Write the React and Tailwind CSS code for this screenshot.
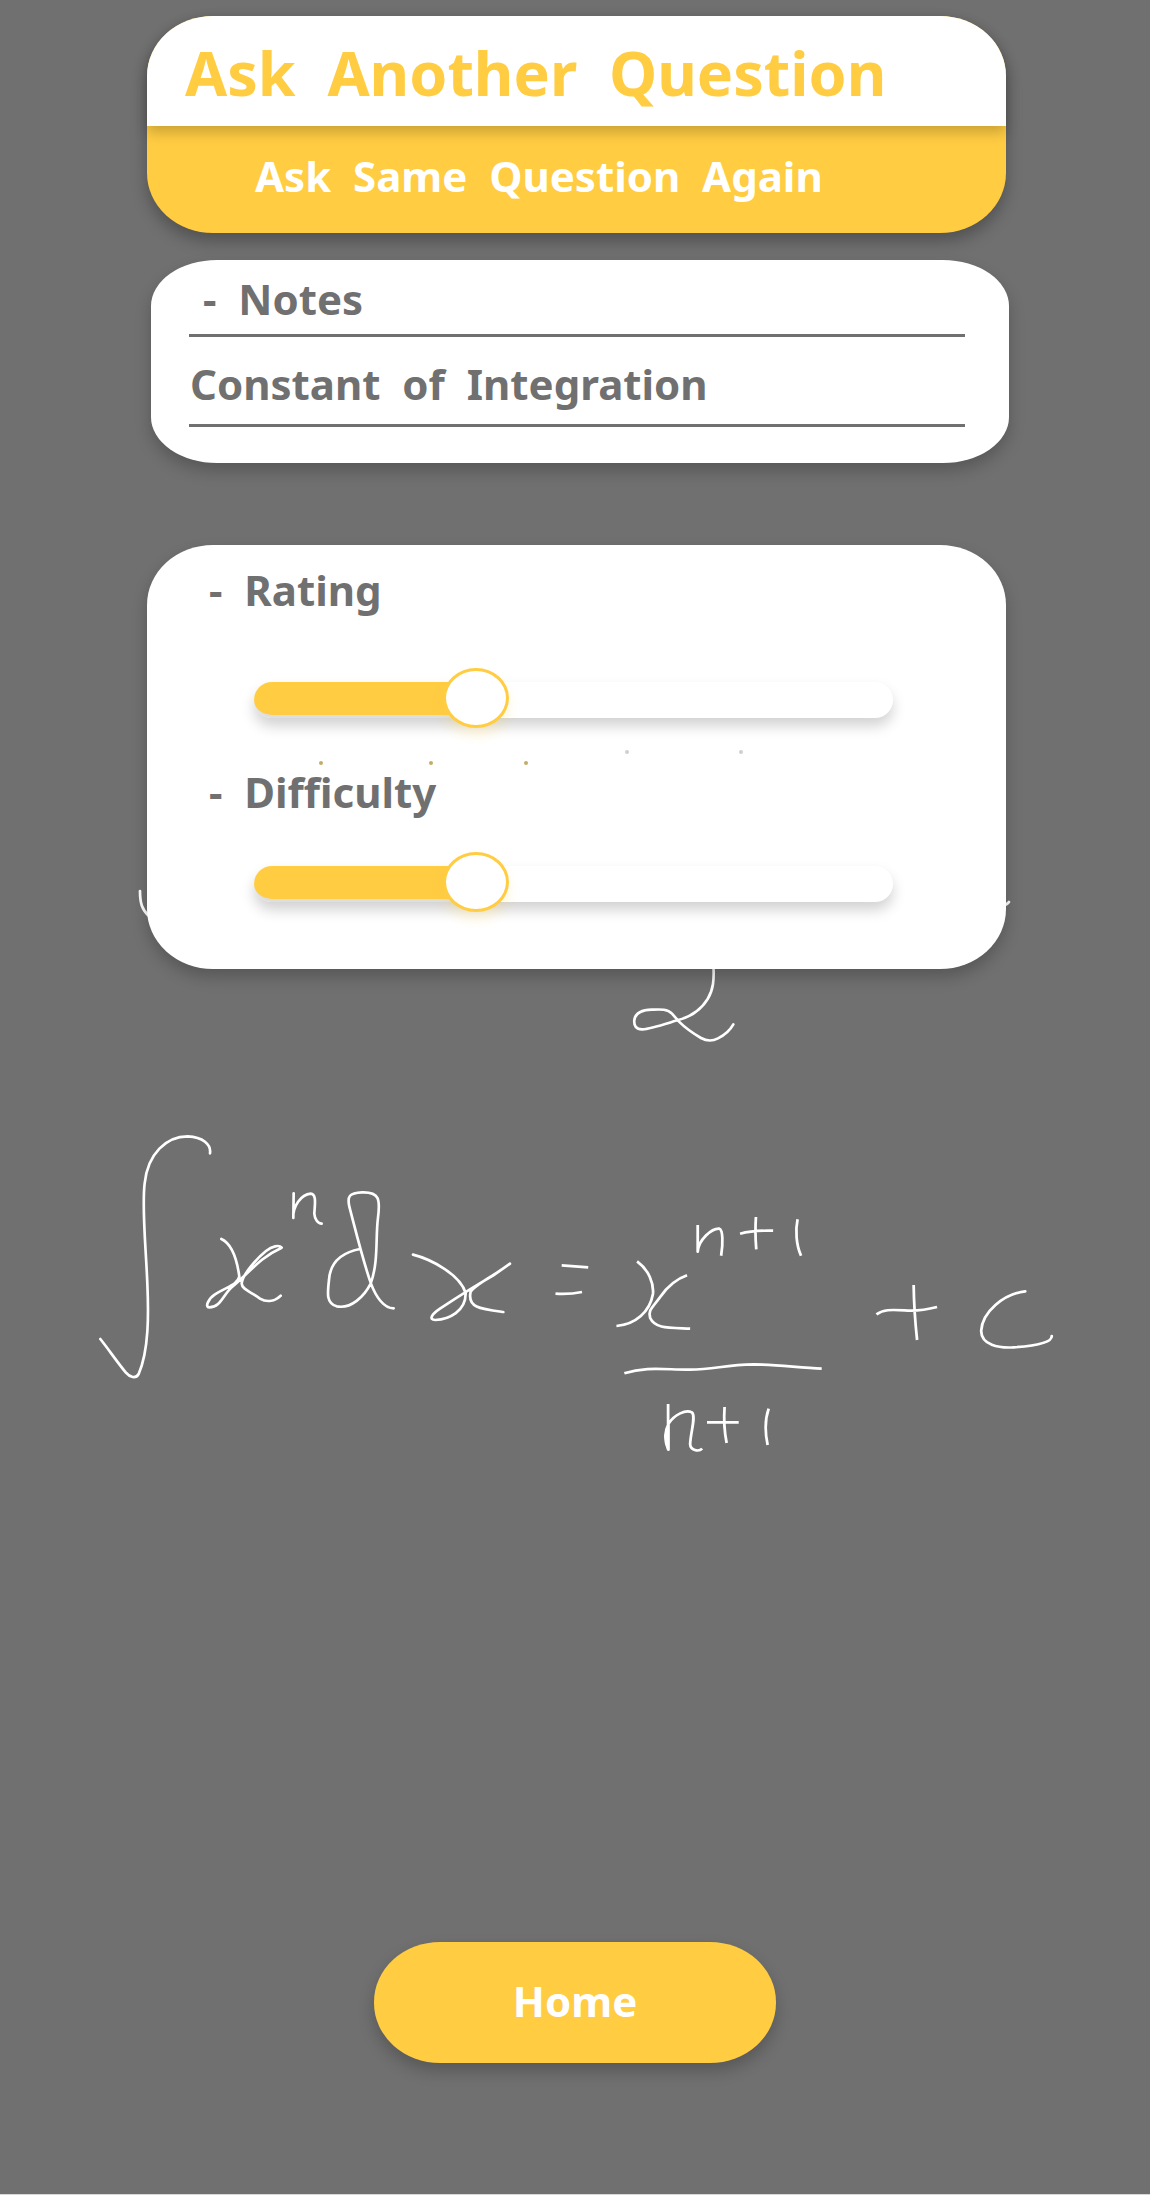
import { useState } from "react";

function Slider({ label, ticks }) {
  const [value, setValue] = useState(33);
  return (
    <div className="relative ml-[107px] mr-[113px] h-9 rounded-[18px] bg-white shadow-[0_8px_14px_rgba(0,0,0,0.18)]">
      <span
        className="absolute left-0 top-0 h-9 rounded-l-[18px] border-b-3 border-[#dedede] bg-[#ffcc42]"
        style={{ width: `calc(33px + (100% - 66px) * ${value / 100})` }}
      />
      <input
        type="range"
        min="0"
        max="100"
        value={value}
        aria-label={label}
        onChange={(e) => setValue(Number(e.target.value))}
        className="absolute inset-x-0 -top-3.5 m-0 h-[60px] w-full cursor-pointer appearance-none bg-transparent outline-none [&::-webkit-slider-thumb]:h-[60px] [&::-webkit-slider-thumb]:w-[66px] [&::-webkit-slider-thumb]:appearance-none [&::-webkit-slider-thumb]:rounded-[50%] [&::-webkit-slider-thumb]:border-[3px] [&::-webkit-slider-thumb]:border-solid [&::-webkit-slider-thumb]:border-[#ffcc42] [&::-webkit-slider-thumb]:bg-white [&::-webkit-slider-thumb]:shadow-[0_8px_12px_rgba(255,204,66,0.18)]"
      />
      {ticks && (
        <svg
          viewBox="0 0 639 20"
          className="pointer-events-none absolute left-0 top-[66px] w-full"
          aria-hidden="true"
        >
          <g fill="#c4ac66">
            <circle cx="67" cy="15" r="2" />
            <circle cx="177" cy="15" r="2" />
            <circle cx="272" cy="15" r="2" />
          </g>
          <g fill="#cfcfcf">
            <circle cx="373" cy="4" r="2" />
            <circle cx="487" cy="4" r="2" />
          </g>
        </svg>
      )}
    </div>
  );
}

function Handwriting() {
  return (
    <svg
      viewBox="0 545 1150 1397"
      className="col-start-1 row-start-1 w-full"
      fill="none"
      stroke="white"
      strokeLinecap="round"
      strokeLinejoin="round"
      role="img"
      aria-label="Handwritten power rule for integration"
    >
      <g strokeWidth="2.7">
        <path d="M140 891C140 903 142 910 149 916" />
        <path d="M1003 905Q1007 905 1009 902" />
      </g>
      <g transform="translate(600 930) scale(.33333)" strokeWidth="8">
        <path d="M340 100C343 150 340 180 323 207C303 240 267 262 232 271C195 282 150 297 128 298C108 299 101 287 103 270C106 247 125 240 155 239C180 238 202 236 216 251L237 275C255 293 279 310 303 324C321 334 337 334 354 325C374 315 390 301 400 283" />
      </g>
      <g transform="translate(80 1110) scale(.33333)" strokeWidth="8">
        <path d="M61 687C85 717 112 757 137 787C150 802 167 808 176 792C207 720 206 612 202 520C197 400 185 290 194 220C203 130 260 79 323 79C368 81 394 103 390 130" />
        <path d="M424 387C455 401 471 448 478 500C472 525 441 530 405 553C386 565 373 592 388 592C422 592 430 553 456 531C505 491 540 442 605 413C597 403 576 409 558 423C533 443 487 493 485 521C486 539 512 545 540 566C562 579 585 573 602 557" />
        <path d="M641 250L640 324C638 290 663 253 692 251C711 252 704 286 703 311C704 328 714 341 725 341" />
        <path d="M840 417C778 429 750 461 747 510C742 552 739 579 770 589C813 598 853 559 872 521C896 455 886 385 894 323C901 268 898 245 846 247C808 249 801 258 808 290C829 370 849 453 873 521C887 559 911 595 941 595" />
        <path d="M999 434C1050 447 1140 492 1157 549C1158 604 1107 628 1066 630C1045 629 1055 613 1080 596C1130 563 1195 522 1239 497L1290 461C1250 493 1188 521 1172 545C1161 593 1202 597 1270 606" />
      </g>
      <g transform="translate(530 1190) scale(.34439 .33333)" strokeWidth="8" strokeLinecap="butt">
        <path d="M92 226L169 232M74 311Q113 314 151 306" />
        <path d="M311 214C345 240 360 280 357 312C348 365 307 403 251 408" />
        <path d="M456 256C428 266 399 290 378 321C354 355 342 361 349 384C363 416 402 413 465 416" />
        <path d="M487 105L487 185C489 150 528 114 550 116C560 119 561 160 555 197" />
        <path d="M610 131C635 124 666 121 706 122M656 81Q653 130 657 178" />
        <path d="M777 88C770 121 773 165 787 197" />
        <path d="M274 550C333 530 383 538 454 539C532 541 560 524 650 523C715 524 782 533 847 536" />
        <path d="M1006 373C1026 358 1047 359 1088 361C1120 364 1148 360 1182 351M1114 285Q1115 364 1124 450" />
        <path strokeLinecap="round" d="M1438 304C1375 312 1313 366 1310 423C1311 465 1360 475 1405 472C1458 468 1516 459 1515 438" />
        <path d="M401 642L401 778C391 752 390 725 403 700C420 673 452 658 470 667C483 679 466 726 465 763C466 780 489 787 500 776" />
        <path fill="white" strokeWidth="3" d="M401 706C388 729 390 758 401 781L404 781L404 706Z" />
        <path d="M514 697L606 697M565 651Q561 708 571 759" />
        <path d="M693 656C682 689 683 731 690 765" />
      </g>
    </svg>
  );
}

export default function App() {
  return (
    <main className="flex min-h-screen flex-col border-b border-[#d8d8d8] bg-[#707070] pt-4 font-['Noto_Sans',sans-serif] text-[42px] leading-[58px] font-bold text-[#707070]">
      <div className="ml-[147px] mr-36 flex flex-col rounded-[66px/60px] bg-[#ffcc42] shadow-[0_8px_16px_rgba(0,0,0,0.28)]">
        <button
          type="button"
          className="h-[110px] cursor-pointer whitespace-pre bg-white pl-[38px] pb-1 pt-2 text-left text-[61px] leading-[84px] text-[#ffcc42] shadow-[0_6px_14px_rgba(0,0,0,0.22)] [border-top-left-radius:66px_60px] [border-top-right-radius:66px_60px]"
        >
          Ask{"  "}Another{"  "}Question
        </button>
        <button
          type="button"
          className="h-[107px] cursor-pointer whitespace-pre pl-[108px] pb-2 text-left text-white"
        >
          Ask{"  "}Same{"  "}Question{"  "}Again
        </button>
      </div>

      <section className="ml-[151px] mr-[141px] mt-[27px] flex h-[203px] flex-col rounded-[66px/46px] bg-white pl-[38px] pr-11 pt-[10px] shadow-[0_8px_16px_rgba(0,0,0,0.22)]">
        <h2 className="h-[67px] whitespace-pre border-b-3 border-[#707070] pl-[14px]">
          -{"  "}Notes
        </h2>
        <p className="mt-[18px] h-[72px] whitespace-pre border-b-3 border-[#707070] pl-px">
          Constant{"  "}of{"  "}Integration
        </p>
      </section>

      <div className="mt-[82px] grid">
        <Handwriting />
        <section className="z-10 col-start-1 row-start-1 ml-[147px] mr-36 flex h-[424px] flex-col self-start rounded-[66px/60px] bg-white pt-4 shadow-[0_8px_16px_rgba(0,0,0,0.22)]">
          <h2 className="mb-[63px] whitespace-pre pl-[62px]">-{"  "}Rating</h2>
          <Slider label="Rating" ticks />
          <h2 className="mt-[45px] mb-[45px] whitespace-pre pl-[62px]">
            -{"  "}Difficulty
          </h2>
          <Slider label="Difficulty" />
        </section>
      </div>

      <button
        type="button"
        className="h-[121px] w-[402px] cursor-pointer self-center rounded-[66px/60px] bg-[#ffcc42] pb-1 text-white shadow-[0_8px_16px_rgba(0,0,0,0.22)]"
      >
        Home
      </button>
    </main>
  );
}
